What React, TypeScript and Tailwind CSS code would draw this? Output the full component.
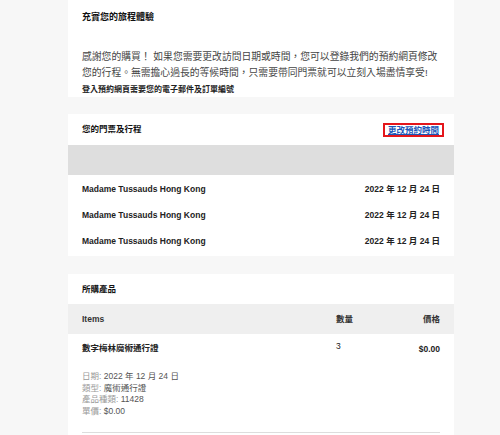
import React from "react";

const FONT = { fontFamily: '"Liberation Sans", "Noto Sans CJK TC", sans-serif' };

const TICKETS = ["Madame Tussauds Hong Kong", "Madame Tussauds Hong Kong", "Madame Tussauds Hong Kong"];

const DETAILS: { label: string; value: string }[] = [
  { label: "日期:", value: "2022 年 12 月 24 日" },
  { label: "類型:", value: "魔術通行證" },
  { label: "產品種類:", value: "11428" },
  { label: "單價:", value: "$0.00" },
];

export default function App() {
  return (
    <div className="min-h-screen w-[500px] bg-[#f7f7f7] pl-[68px]" style={FONT}>
      <div className="w-[386px] flex flex-col">
        {/* intro */}
        <section className="bg-white px-[14px] pt-[12px] pb-[2px]">
          <h2 className="text-[9px] leading-[10px] font-bold text-[#111]">充實您的旅程體驗</h2>
          <p className="mt-[27px] text-[9.8px] leading-[16px] text-[#444] whitespace-nowrap">
            感謝您的購買！ 如果您需要更改訪問日期或時間，您可以登錄我們的預約網頁修改
            <br />
            您的行程。無需擔心過長的等候時間，只需要帶同門票就可以立刻入場盡情享受!
          </p>
          <p className="mt-[4px] text-[8px] leading-[10px] font-bold text-[#222]">登入預約網頁需要您的電子郵件及訂單編號</p>
        </section>

        {/* tickets */}
        <section className="mt-[17px] bg-white pb-[2px]">
          <div className="h-[31px] flex items-center justify-between pl-[14px] pr-[10px]">
            <h2 className="text-[8.5px] font-bold text-[#111]">您的門票及行程</h2>
            <a href="#" className="border-2 border-[#e4161b] px-[3px] text-[8.5px] leading-[10px] font-bold text-[#1a56b8] underline">
              更改預約時間
            </a>
          </div>
          <div className="h-[30px] bg-[#dedede]" />
          <div className="pt-[1px] px-[14px]">
            {TICKETS.map((t, i) => (
              <div key={i} className="h-[26px] flex items-center justify-between text-[8.5px] font-bold text-[#222]">
                <span>{t}</span>
                <span>2022 年 12 月 24 日</span>
              </div>
            ))}
          </div>
        </section>

        {/* products */}
        <section className="mt-[18px] bg-white pb-[20px]">
          <div className="h-[30px] flex items-center px-[14px]">
            <h2 className="text-[8.5px] font-bold text-[#111]">所購產品</h2>
          </div>
          <div className="h-[30px] bg-[#efefef] flex items-center px-[14px] text-[8.5px] font-bold text-[#333]">
            <span className="flex-1">Items</span>
            <span className="w-[64px]">數量</span>
            <span className="w-[40px] text-right">價格</span>
          </div>
          <div className="px-[14px]">
            <div className="flex items-start pt-[9px] text-[8.5px] leading-[10px] text-[#222]">
              <span className="flex-1 font-bold">數字梅林魔術通行證</span>
              <span className="w-[64px] -mt-[2px]">3</span>
              <span className="w-[40px] text-right font-bold mt-[1px]">$0.00</span>
            </div>
            <div className="mt-[17px] flex flex-col text-[8.5px] leading-[11.7px]">
              {DETAILS.map((d) => (
                <div key={d.label}>
                  <span className="text-[#999]">{d.label}</span> <span className="text-[#555]">{d.value}</span>
                </div>
              ))}
            </div>
            <div className="mt-[14px] border-t border-[#dddddd]" />
          </div>
        </section>
      </div>
    </div>
  );
}
